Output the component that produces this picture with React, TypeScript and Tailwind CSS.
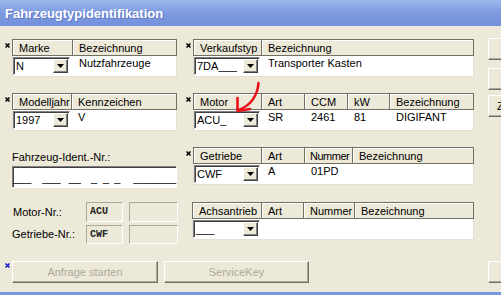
import React from "react";

type Col = { label: string; w: string; value?: string; hx?: string };

function Mark({ blue }: { blue?: boolean }) {
  return (
    <svg width="5" height="5" viewBox="0 0 5 5" className="block">
      <path
        d="M0.5 0.5 L4.5 4.5 M4.5 0.5 L0.5 4.5"
        stroke={blue ? "#1818c8" : "#000"}
        strokeWidth="1.5"
      />
    </svg>
  );
}

function Combo({ value, w }: { value: string; w: string }) {
  return (
    <div
      className={`${w} h-[18px] flex items-center bg-white border border-t-[#808080] border-l-[#808080] border-b-white border-r-white shadow-[inset_1px_1px_0_#404040] p-px`}
    >
      <span className="pl-[1px] leading-[13px] whitespace-nowrap">{value}</span>
      <div className="ml-auto w-[15px] h-[14px] shrink-0 bg-[#ECE9D8] border border-t-white border-l-white border-b-[#404040] border-r-[#404040] shadow-[inset_-1px_-1px_0_#808080] flex items-center justify-center">
        <svg width="7" height="4" viewBox="0 0 7 4" className="block">
          <path d="M0 0 H7 L3.5 4 Z" fill="#000" />
        </svg>
      </div>
    </div>
  );
}

function Group({
  w,
  cols,
  combo,
  comboW,
  marker,
  extra,
}: {
  w: string;
  cols: Col[];
  combo: string;
  comboW: string;
  marker?: boolean;
  extra?: string;
}) {
  return (
    <div className={`relative shrink-0 ${w} ${extra ?? ""}`}>
      {marker && (
        <span className="absolute -left-[7px] top-[4px]">
          <Mark />
        </span>
      )}
      <div className="flex h-[17px]">
        {cols.map((c, i) => (
          <div
            key={i}
            className={`${c.w} shrink-0 h-[17px] border-t border-b border-l border-[#716F64] ${
              i === cols.length - 1 ? "border-r" : ""
            } shadow-[inset_1px_1px_0_#fff] ${c.hx ?? "pl-[6px]"} pt-[2px] leading-[13px] whitespace-nowrap overflow-hidden`}
          >
            {c.label}
          </div>
        ))}
      </div>
      <div className="flex h-[21px] bg-white border-x border-b border-[#E4E1D4]">
        {cols.map((c, i) =>
          i === 0 ? (
            <div key={i} className={`${c.w} shrink-0 -ml-px pt-px`}>
              <div className="pl-px">
                <Combo value={combo} w={comboW} />
              </div>
            </div>
          ) : (
            <div
              key={i}
              className={`${c.w} shrink-0 pl-[7px] pt-[1px] leading-[13px] whitespace-nowrap overflow-hidden`}
            >
              {c.value ?? ""}
            </div>
          )
        )}
      </div>
    </div>
  );
}

function DisabledBox({ w, h, text }: { w: string; h: string; text?: string }) {
  return (
    <div
      className={`${w} ${h} shrink-0 flex items-center border border-t-[#ACA899] border-l-[#ACA899] border-b-white border-r-white bg-[#ECE9D8] pl-[3px]`}
    >
      {text && (
        <span className="font-['Liberation_Mono','Courier_New',monospace] font-bold text-[10px] leading-none text-[#222]">
          {text}
        </span>
      )}
    </div>
  );
}

function WinButton({
  w,
  text,
  disabled,
  extra,
  align,
}: {
  w: string;
  text?: string;
  disabled?: boolean;
  extra?: string;
  align?: string;
}) {
  return (
    <div
      className={`${w} h-[22px] shrink-0 flex items-center ${
        align ?? "justify-center"
      } bg-[#ECE9D8] border border-t-white border-l-white border-b-[#716F64] border-r-[#716F64] shadow-[inset_-1px_-1px_0_#ACA899] ${
        disabled ? "text-[#ACA899]" : "text-black"
      } ${extra ?? ""} whitespace-nowrap`}
    >
      {text}
    </div>
  );
}

function Dash({ text, ml }: { text: string; ml?: string }) {
  return <span className={`${ml ?? ""} leading-[13px] whitespace-nowrap`}>{text}</span>;
}

export default function App() {
  return (
    <div className="relative w-[501px] h-[295px] overflow-hidden bg-[#ECE9D8] flex flex-col text-[11px] text-black font-['Liberation_Sans',Arial,sans-serif]">
      <div className="h-[26px] shrink-0 bg-gradient-to-b from-[#9db6ec] via-[#7e9ae0] to-[#7390db] flex items-center pl-[5px] pt-[1px]">
        <span className="text-white font-bold text-[13px] leading-none [text-shadow:1px_1px_0_#6078c4]">
          Fahrzeugtypidentifikation
        </span>
      </div>

      <div className="flex-1 flex flex-col">
        <div className="flex">
          <div className="pl-[12px] w-[474px] shrink-0 flex flex-col">
            {/* Row 1 */}
            <div className="flex gap-[16px] mt-[13px]">
              <Group
                w="w-[165px]"
                marker
                combo="N"
                comboW="w-[57px]"
                cols={[
                  { label: "Marke", w: "w-[60px]" },
                  { label: "Bezeichnung", w: "w-[105px]", value: "Nutzfahrzeuge" },
                ]}
              />
              <Group
                w="w-[281px]"
                marker
                combo="7DA___"
                comboW="w-[66px]"
                cols={[
                  { label: "Verkaufstyp", w: "w-[68px]" },
                  { label: "Bezeichnung", w: "w-[213px]", value: "Transporter Kasten" },
                ]}
              />
            </div>

            {/* Row 2 */}
            <div className="flex gap-[16px] mt-[16px]">
              <Group
                w="w-[165px]"
                marker
                combo="1997"
                comboW="w-[57px]"
                cols={[
                  { label: "Modelljahr", w: "w-[59px]" },
                  { label: "Kennzeichen", w: "w-[106px]", value: "V" },
                ]}
              />
              <Group
                w="w-[281px]"
                marker
                combo="ACU_"
                comboW="w-[66px]"
                cols={[
                  { label: "Motor", w: "w-[68px]" },
                  { label: "Art", w: "w-[43px]", value: "SR" },
                  { label: "CCM", w: "w-[43px]", value: "2461" },
                  { label: "kW", w: "w-[42px]", value: "81" },
                  { label: "Bezeichnung", w: "w-[85px]", value: "DIGIFANT" },
                ]}
              />
            </div>

            {/* Row 3 */}
            <div className="flex gap-[16px] mt-[16px]">
              <div className="w-[165px] shrink-0 flex flex-col">
                <div className="mt-[4px] leading-[13px] whitespace-nowrap">
                  Fahrzeug-Ident.-Nr.:
                </div>
                <div className="mt-[2px] h-[22px] bg-white border border-t-[#808080] border-l-[#808080] border-b-white border-r-white shadow-[inset_1px_1px_0_#404040] flex items-end pb-[2px]">
                  <Dash text="___" />
                  <Dash text="___" ml="ml-[11px]" />
                  <Dash text="__" ml="ml-[8px]" />
                  <Dash text="_" ml="ml-[10px]" />
                  <Dash text="_" ml="ml-[6px]" />
                  <Dash text="_" ml="ml-[5px]" />
                  <Dash text="_______" ml="ml-[13px]" />
                </div>
              </div>
              <Group
                w="w-[281px]"
                marker
                combo="CWF"
                comboW="w-[66px]"
                cols={[
                  { label: "Getriebe", w: "w-[68px]" },
                  { label: "Art", w: "w-[43px]", value: "A" },
                  { label: "Nummer", w: "w-[48px]", value: "01PD", hx: "pl-[5px] tracking-[-0.5px]" },
                  { label: "Bezeichnung", w: "w-[122px]" },
                ]}
              />
            </div>

            {/* Row 4 */}
            <div className="flex gap-[16px] mt-[14px]">
              <div className="w-[165px] shrink-0 flex flex-col">
                <div className="flex items-center h-[20px]">
                  <div className="w-[74px] shrink-0 pl-[1px] whitespace-nowrap">Motor-Nr.:</div>
                  <DisabledBox w="w-[37px]" h="h-[20px]" text="ACU" />
                  <div className="w-[6px] shrink-0" />
                  <DisabledBox w="w-[49px]" h="h-[20px]" />
                </div>
                <div className="flex items-center h-[19px] mt-[3px]">
                  <div className="w-[74px] shrink-0 whitespace-nowrap">Getriebe-Nr.:</div>
                  <DisabledBox w="w-[37px]" h="h-[19px]" text="CWF" />
                  <div className="w-[6px] shrink-0" />
                  <DisabledBox w="w-[49px]" h="h-[19px]" />
                </div>
              </div>
              <Group
                w="w-[282px]"
                extra="-ml-px"
                combo="___"
                comboW="w-[67px]"
                cols={[
                  { label: "Achsantrieb", w: "w-[69px]" },
                  { label: "Art", w: "w-[42px]" },
                  { label: "Nummer", w: "w-[51px]" },
                  { label: "Bezeichnung", w: "w-[120px]" },
                ]}
              />
            </div>
          </div>

          {/* Right side buttons */}
          <div className="ml-[14px] flex flex-col shrink-0">
            <WinButton w="w-[80px]" extra="mt-[12px]" />
            <WinButton w="w-[80px]" extra="mt-[8px]" />
            <WinButton w="w-[80px]" extra="mt-[5px] pl-[8px]" align="justify-start" text="Z" />
          </div>
        </div>

        {/* Bottom buttons */}
        <div className="flex pl-[12px] mt-[17px]">
          <div className="relative">
            <span className="absolute -left-[7px] top-[2px]">
              <Mark blue />
            </span>
            <WinButton w="w-[146px]" text="Anfrage starten" disabled />
          </div>
          <WinButton w="w-[145px]" text="ServiceKey" disabled extra="ml-[6px]" />
          <WinButton w="w-[80px]" extra="ml-[179px]" />
        </div>
      </div>

      <div className="h-[3px] shrink-0 bg-[#7a96df]" />

      {/* red annotation arrow */}
      <svg
        className="absolute inset-0 pointer-events-none"
        width="501"
        height="295"
        viewBox="0 0 501 295"
      >
        <path
          d="M258.5 83 C257.5 95 251 105 239 110"
          fill="none"
          stroke="#e8121a"
          strokeWidth="2.6"
          strokeLinecap="round"
        />
        <path
          d="M237.5 98 L237.5 111 L250 109"
          fill="none"
          stroke="#e8121a"
          strokeWidth="2.6"
          strokeLinecap="round"
          strokeLinejoin="round"
        />
      </svg>
    </div>
  );
}
